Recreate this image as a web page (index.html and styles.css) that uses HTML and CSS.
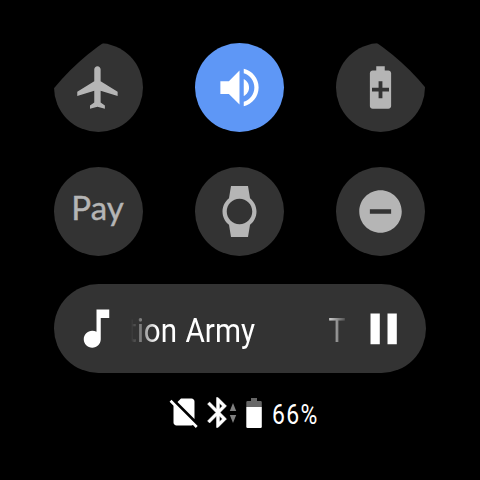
FILE: index.html
```html
<!DOCTYPE html>
<html lang="en">
<head>
<meta charset="utf-8">
<title>Quick settings</title>
<link rel="stylesheet" href="styles.css">
</head>
<body>
<main class="watch-face">
  <section class="toggles">
    <button class="toggle" aria-label="Airplane mode">
      <svg class="icon" viewBox="0 0 24 24"><path d="M21 16v-2l-8-5V3.5c0-.83-.67-1.5-1.5-1.5S10 2.67 10 3.5V9l-8 5v2l8-2.5V19l-2 1.5V22l3.500-1 3.500 1v-1.500L13 19v-5.500l8 2.500z"/></svg>
    </button>
    <button class="toggle toggle-on" aria-label="Sound">
      <svg class="icon" viewBox="0 0 24 24"><path d="M3 9v6h4l5 5V4L7 9H3zm13.500 3c0-1.770-1.020-3.290-2.500-4.030v8.050c1.480-.73 2.500-2.250 2.500-4.020zM14 3.230v2.060c2.890.86 5 3.540 5 6.710s-2.110 5.850-5 6.710v2.060c4.010-.91 7-4.490 7-8.770s-2.990-7.860-7-8.770z"/></svg>
    </button>
    <button class="toggle" aria-label="Battery saver">
      <svg class="icon" viewBox="0 0 24 24"><path fill-rule="evenodd" d="M15.670 4H14V2h-4v2H8.330C7.600 4 7 4.600 7 5.330v15.330C7 21.400 7.600 22 8.330 22h7.330c.74 0 1.340-.6 1.340-1.330V5.330C17 4.600 16.400 4 15.670 4zM11.100 9h1.800v3.100H16v1.800h-3.100V17h-1.800v-3.100H8v-1.800h3.100z"/></svg>
    </button>
    <button class="toggle"><span class="pay">Pay</span></button>
    <button class="toggle" aria-label="Theater mode">
      <svg class="icon" viewBox="0 0 24 24"><path d="M20 12c0-2.540-1.190-4.810-3.040-6.270L16 0H8l-.95 5.730C5.190 7.190 4 9.450 4 12s1.190 4.810 3.050 6.270L8 24h8l.96-5.730C18.810 16.810 20 14.540 20 12zM6 12c0-3.310 2.690-6 6-6s6 2.690 6 6-2.690 6-6 6-6-2.690-6-6z"/></svg>
    </button>
    <button class="toggle" aria-label="Do not disturb">
      <svg class="icon" viewBox="0 0 24 24"><path d="M12 2C6.480 2 2 6.480 2 12s4.480 10 10 10 10-4.480 10-10S17.520 2 12 2zm5 11.100H7v-2.200h10v2.200z"/></svg>
    </button>
  </section>
  <section class="player">
    <svg class="icon note" viewBox="0 0 24 24"><path d="M12 3v10.550c-.59-.34-1.270-.55-2-.55-2.210 0-4 1.790-4 4s1.790 4 4 4 4-1.790 4-4V7h4V3h-6z"/></svg>
    <div class="marquee">
      <svg class="track" viewBox="0 0 218 48">
        <text x="-4" y="36.700" textLength="50" lengthAdjust="spacingAndGlyphs">tion</text>
        <text x="54.500" y="36.700" textLength="69.500" lengthAdjust="spacingAndGlyphs">Army</text>
        <text x="197.500" y="36.700" textLength="17" lengthAdjust="spacingAndGlyphs">T</text>
      </svg>
    </div>
    <svg class="pause" viewBox="0 0 28 32"><path d="M.5.500h9.300v30.800H.5zM17.500.500h9.300v30.800h-9.300z"/></svg>
  </section>
  <footer class="status">
    <svg class="sim" viewBox="2 2 19.333 21.333"><path d="M18.990 5c0-1.100-.89-2-1.990-2h-7L7.660 5.340 19 16.680 18.990 5zM3.650 3.880L2.380 5.150 5 7.770V19c0 1.100.9 2 2 2h10.010c.35 0 .67-.1.96-.26l1.880 1.880 1.270-1.270L3.650 3.880z"/></svg>
    <svg class="bluetooth" viewBox="0 0 30 32">
      <path class="rune" transform="translate(-7 -2.500) scale(1.500)" d="M17.710 7.710L12 2h-1v7.590L6.410 5 5 6.410 10.590 12 5 17.590 6.410 19 11 14.410V22h1l5.710-5.710-4.300-4.290 4.300-4.290zM13 5.830l1.880 1.880L13 9.590V5.830zm1.880 10.460L13 18.170v-3.760l1.880 1.880z"/>
      <path class="traffic" d="M22.800 14l3.200-8 3.200 8zM22.800 18l3.200 8 3.200-8z"/>
    </svg>
    <svg class="battery" viewBox="0 0 16 32">
      <path class="dim" d="M5 1h6v3h3.500q1.300 0 1.300 1.300V10H.3V5.300Q.3 4 1.600 4H5z"/>
      <path d="M.3 10h15.500v19.700q0 1.300-1.300 1.300H1.600Q.3 31 .3 29.700z"/>
    </svg>
    <svg class="percent" viewBox="0 0 60 32"><text x="0" y="26.500" textLength="46.500" lengthAdjust="spacingAndGlyphs">66%</text></svg>
  </footer>
</main>
</body>
</html>
```
FILE: styles.css
```css
* { box-sizing: border-box; }
body {
  margin: 0;
  background: #000;
  font-family: Roboto, "Liberation Sans", sans-serif;
}
svg { display: block; fill: #fff; flex: none; }
.watch-face {
  width: 480px;
  height: 480px;
  padding: 43px 54px 0;
  border-radius: 50%;
  overflow: hidden;
  background: #000;
  display: flex;
  flex-direction: column;
}
.toggles {
  display: grid;
  grid-template-columns: repeat(3, 89px);
  grid-auto-rows: 89px;
  column-gap: 52px;
  row-gap: 35px;
}
.toggle {
  display: flex;
  align-items: center;
  justify-content: center;
  padding: 0;
  border: 0;
  border-radius: 50%;
  background: #333;
  color: #b5b5b5;
}
.toggle .icon { fill: #b5b5b5; }
.toggle-on { background: #5e97f6; }
.toggle-on .icon { fill: #fff; }
.icon { width: 51px; height: 51px; }
.pay {
  font: 400 33px/40px Lato, "Open Sans", sans-serif;
  -webkit-text-stroke: 0.4px #b5b5b5;
  margin: -9px 2px 0 0;
}
.player {
  display: flex;
  align-items: center;
  width: 372px;
  height: 89px;
  margin-top: 28px;
  padding-left: 17px;
  border-radius: 45px;
  background: #333;
}
.marquee {
  margin-left: 9px;
  width: 218px;
  height: 48px;
  mask-image: linear-gradient(to right, transparent 0, #000 26px, #000 192px, transparent 218px);
}
.track { width: 218px; height: 48px; font-size: 33px; }
.pause { width: 28px; height: 32px; margin-left: 21px; }
.status {
  display: flex;
  align-items: center;
  height: 32px;
  margin-top: 24px;
  padding-left: 115px;
}
.sim { width: 29px; height: 32px; }
.bluetooth { width: 30px; height: 32px; margin-left: 9px; }
.rune { stroke: #fff; stroke-width: 0.3; }
.traffic { fill: #808080; }
.battery { width: 16px; height: 32px; margin-left: 9px; }
.percent { width: 60px; height: 32px; margin-left: 10px; font-size: 27px; letter-spacing: 1.5px; }
.dim { fill: #666; }
```
